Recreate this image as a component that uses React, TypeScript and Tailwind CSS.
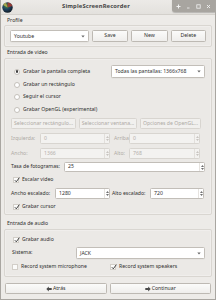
import React from "react";

const Radio = ({ checked }: { checked?: boolean }) => (
  <span className="relative flex h-[6px] w-[6px] shrink-0 items-center justify-center rounded-full border border-[#c4c0ba] bg-white">
    {checked && <span className="h-[2.5px] w-[2.5px] rounded-full bg-[#3c3c3c]" />}
  </span>
);

const Check = ({ checked }: { checked?: boolean }) => (
  <span className="relative flex h-[6px] w-[6px] shrink-0 items-center justify-center border border-[#d2cec8] bg-[#fbfbfa]">
    {checked && (
      <svg width="6" height="6" viewBox="0 0 6 6" className="absolute -top-[1px] left-0">
        <path d="M0.8 3.2 L2.3 4.8 L5.4 0.6" fill="none" stroke="#2e2e2e" strokeWidth="0.9" />
      </svg>
    )}
  </span>
);

const Arrow = () => (
  <svg width="4" height="3" viewBox="0 0 4 3" className="shrink-0">
    <path d="M0.3 0.6 L3.7 0.6 L2 2.6 Z" fill="#6a6a6a" />
  </svg>
);

const Combo = ({ text, className = "" }: { text: string; className?: string }) => (
  <div className={`flex items-center justify-between rounded-[1.5px] border border-[#c2beb8] bg-white pl-[3px] pr-[3px] shadow-[0_0.5px_0_rgba(0,0,0,0.05)] ${className}`}>
    <span className="leading-[1.3]">{text}</span>
    <Arrow />
  </div>
);

const Button = ({ text, disabled, className = "" }: { text: React.ReactNode; disabled?: boolean; className?: string }) => (
  <div
    className={`flex items-center justify-center rounded-[1.5px] border ${
      disabled ? "border-[#d8d5d0] bg-[#f1f0ee] text-[#aeaaa5]" : "border-[#bdb9b3] bg-gradient-to-b from-[#fbfbfa] to-[#efeeec]"
    } ${className}`}
  >
    {text}
  </div>
);

const Spin = ({ value, disabled, className = "" }: { value: string; disabled?: boolean; className?: string }) => (
  <div
    className={`flex items-stretch rounded-[1.5px] border ${
      disabled ? "border-[#d8d5d0] bg-[#f3f2f0] text-[#b3afaa]" : "border-[#c2beb8] bg-white"
    } ${className}`}
  >
    <span className="flex flex-1 items-center pl-[3px]">{value}</span>
    <span className={`flex w-[5px] flex-col items-center justify-center gap-[1px] border-l ${disabled ? "border-[#e2dfdb]" : "border-[#e6e3df]"}`}>
      <svg width="3" height="2" viewBox="0 0 3 2">
        <path d="M0 2 L1.5 0 L3 2 Z" fill={disabled ? "#c8c4bf" : "#707070"} />
      </svg>
      <svg width="3" height="2" viewBox="0 0 3 2">
        <path d="M0 0 L3 0 L1.5 2 Z" fill={disabled ? "#c8c4bf" : "#707070"} />
      </svg>
    </span>
  </div>
);

const Frame = ({ children, className = "" }: { children: React.ReactNode; className?: string }) => (
  <div className={`rounded-[2px] border border-[#d9d6d1] bg-[#ebe9e6] shadow-[inset_0_0_0_0.5px_rgba(255,255,255,0.5)] ${className}`}>{children}</div>
);

export default function App() {
  return (
    <div className="flex h-[300px] w-[216px] flex-col overflow-hidden whitespace-nowrap border-x border-b border-[#a9a6a1] bg-[#edebe8] font-['Noto_Sans',sans-serif] text-[5.15px] leading-none text-[#2f2f2f]">
      {/* title bar */}
      <div className="relative flex h-[15px] shrink-0 items-center border-b border-[#d3d0cb] bg-gradient-to-b from-[#eceae7] to-[#e3e1dd]">
        <svg width="11" height="11" viewBox="0 0 11 11" className="ml-[1px]">
          <defs>
            <radialGradient id="g" cx="0.4" cy="0.35" r="0.7">
              <stop offset="0" stopColor="#3f8a4a" />
              <stop offset="0.5" stopColor="#1d3f5e" />
              <stop offset="1" stopColor="#101820" />
            </radialGradient>
          </defs>
          <circle cx="5.5" cy="5.5" r="5.2" fill="url(#g)" />
          <path d="M5.5 0.5 A5 5 0 0 1 10.3 4 L5.5 5.5 Z" fill="#b43a2a" opacity="0.8" />
          <path d="M1 3 A5 5 0 0 1 4 0.6 L5.5 5.5 Z" fill="#d9c24a" opacity="0.7" />
        </svg>
        <div className="flex-1 pr-[36px] text-center text-[5.8px] font-bold tracking-[0.15px] text-[#454545]">SimpleScreenRecorder</div>
        <div className="absolute right-0 top-0 flex h-[12px] w-[43px] items-center justify-around rounded-bl-[3px] bg-[#a8a5a0] px-[2px] text-[#f4f4f4] shadow-[0_0.5px_1px_rgba(0,0,0,0.2)]">
          <svg width="5" height="5" viewBox="0 0 5 5"><path d="M2.5 0.5 V4.5 M0.5 2.5 H4.5" stroke="#f2f2f2" strokeWidth="1" /></svg>
          <svg width="5" height="5" viewBox="0 0 5 5"><path d="M1 4 H3.5" stroke="#f2f2f2" strokeWidth="0.8" /></svg>
          <svg width="5" height="5" viewBox="0 0 5 5"><rect x="0.8" y="0.8" width="3.4" height="3.4" fill="none" stroke="#f2f2f2" strokeWidth="0.8" /></svg>
          <svg width="5" height="5" viewBox="0 0 5 5"><path d="M1 1 L4 4 M4 1 L1 4" stroke="#f2f2f2" strokeWidth="0.9" /></svg>
        </div>
      </div>

      <div className="flex flex-1 flex-col px-[3px]">
        {/* Profile */}
        <div className="flex h-[10px] items-center pl-[3px] pt-[1px]">Profile</div>
        <Frame className="flex h-[22px] items-center gap-[3px] px-[5px]">
          <Combo text="Youtube" className="h-[12px] w-[80px]" />
          <Button text="Save" className="h-[12px] w-[37px]" />
          <Button text="New" className="h-[12px] w-[37px]" />
          <Button text="Delete" className="h-[12px] w-[36px]" />
        </Frame>

        {/* Video */}
        <div className="flex h-[11px] items-center pl-[3px] pt-[1px]">Entrada de video</div>
        <Frame className="flex h-[157px] flex-col px-[6px] pt-[6px]">
          <div className="flex h-[13px] items-center">
            <div className="flex flex-1 items-center gap-[3px] pl-[3px]">
              <Radio checked />
              <span>Grabar la pantalla completa</span>
            </div>
            <Combo text="Todas las pantallas: 1366x768" className="h-[13px] w-[94px]" />
          </div>
          <div className="flex h-[13px] items-center gap-[3px] pl-[3px]">
            <Radio />
            <span>Grabar un rectángulo</span>
          </div>
          <div className="flex h-[12px] items-center gap-[3px] pl-[3px]">
            <Radio />
            <span>Seguir el cursor</span>
          </div>
          <div className="flex h-[14px] items-center gap-[3px] pl-[3px]">
            <Radio />
            <span>Grabar OpenGL (experimental)</span>
          </div>
          <div className="mt-[1px] flex h-[11px] items-center gap-[3px]">
            <Button disabled text="Seleccionar rectángulo..." className="h-[11px] w-[65px]" />
            <Button disabled text="Seleccionar ventana..." className="h-[11px] w-[58px]" />
            <Button disabled text="Opciones de OpenGL..." className="h-[11px] w-[61px]" />
          </div>
          <div className="mt-[4px] flex h-[11px] items-center text-[#aeaaa5]">
            <span className="w-[29px]">Izquierda:</span>
            <Spin disabled value="0" className="h-[11px] w-[70px]" />
            <span className="w-[19px] pl-[4px]">Arriba:</span>
            <Spin disabled value="0" className="h-[11px] w-[71px]" />
          </div>
          <div className="mt-[4px] flex h-[11px] items-center text-[#aeaaa5]">
            <span className="w-[29px]">Ancho:</span>
            <Spin disabled value="1366" className="h-[11px] w-[70px]" />
            <span className="w-[19px] pl-[4px]">Alto:</span>
            <Spin disabled value="768" className="h-[11px] w-[71px]" />
          </div>
          <div className="mt-[3px] flex h-[10px] items-center">
            <span className="w-[53px]">Tasa de fotogramas:</span>
            <Spin value="25" className="h-[10px] flex-1" />
          </div>
          <div className="mt-[2px] flex h-[12px] items-center gap-[3px] pl-[2px]">
            <Check checked />
            <span>Escalar video</span>
          </div>
          <div className="mt-[2px] flex h-[11px] items-center">
            <span className="w-[44px]">Ancho escalado:</span>
            <Spin value="1280" className="h-[11px] w-[55px]" />
            <span className="w-[40px] pl-[2px]">Alto escalado:</span>
            <Spin value="720" className="h-[11px] w-[54px]" />
          </div>
          <div className="mt-[2px] flex h-[12px] items-center gap-[3px] pl-[2px]">
            <Check checked />
            <span>Grabar cursor</span>
          </div>
        </Frame>

        {/* Audio */}
        <div className="flex h-[14px] items-center pl-[3px] pt-[4px]">Entrada de audio</div>
        <Frame className="flex h-[48px] flex-col px-[6px] pt-[4px]">
          <div className="flex h-[12px] items-center gap-[3px] pl-[2px]">
            <Check checked />
            <span>Grabar audio</span>
          </div>
          <div className="mt-[1px] flex h-[12px] items-center">
            <span className="w-[65px] pl-[1px]">Sistema:</span>
            <Combo text="JACK" className="h-[12px] flex-1" />
          </div>
          <div className="mt-[2px] flex h-[12px] items-center">
            <div className="flex w-[99px] items-center gap-[3px] pl-[1px]">
              <Check />
              <span>Record system microphone</span>
            </div>
            <div className="flex items-center gap-[3px]">
              <Check checked />
              <span>Record system speakers</span>
            </div>
          </div>
        </Frame>

        {/* bottom buttons */}
        <div className="mt-[6px] flex gap-[3px] px-[1px]">
          <Button
            text={
              <span className="flex items-center gap-[1px]">
                <svg width="6" height="6" viewBox="0 0 6 6"><path d="M0.3 3 L2.8 0.5 V2 H5.7 V4 H2.8 V5.5 Z" fill="#4a4a4a" /></svg>
                Atrás
              </span>
            }
            className="h-[11px] flex-1"
          />
          <Button
            text={
              <span className="flex items-center gap-[1px]">
                <svg width="6" height="6" viewBox="0 0 6 6"><path d="M5.7 3 L3.2 0.5 V2 H0.3 V4 H3.2 V5.5 Z" fill="#4a4a4a" /></svg>
                Continuar
              </span>
            }
            className="h-[11px] flex-1"
          />
        </div>
      </div>
    </div>
  );
}
